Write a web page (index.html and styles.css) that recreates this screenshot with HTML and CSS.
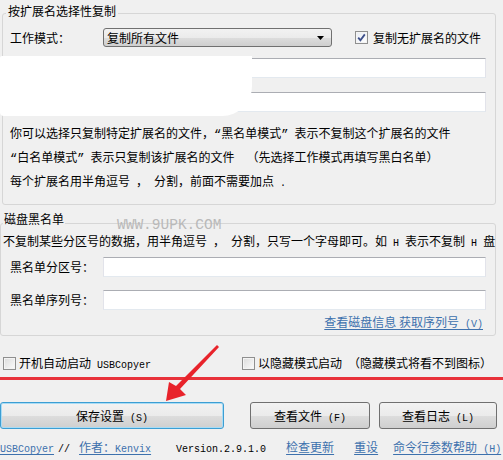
FILE: index.html
```html
<!DOCTYPE html>
<html lang="zh-CN">
<head>
<meta charset="utf-8">
<title>USBCopyer</title>
<link rel="stylesheet" href="styles.css">
</head>
<body>
<div class="page">
  <fieldset class="grp g1">
    <legend>按扩展名选择性复制</legend>
    <div class="row r1">
      <span class="lbl">工作模式：</span>
      <div class="combo">
        <span>复制所有文件</span>
        <svg class="drop" width="7" height="4" viewBox="0 0 7 4"><path d="M0 0H7L3.5 4Z" fill="#000"/></svg>
      </div>
      <span class="chk on">
        <svg width="9" height="9" viewBox="0 0 9 9"><path d="M1.2 4.6L3.4 7.2L7.8 1.4" fill="none" stroke="#3d4f8a" stroke-width="1.8"/></svg>
      </span>
      <span class="chk-text">复制无扩展名的文件</span>
    </div>
    <div class="field f1"></div>
    <div class="field f2"></div>
    <div class="desc">
      <p>你可以选择只复制特定扩展名的文件，<span class="q">“</span>黑名单模式<span class="q">”</span><span class="m"> </span>表示不复制这个扩展名的文件</p>
      <p><span class="q">“</span>白名单模式<span class="q">”</span><span class="m"> </span>表示只复制该扩展名的文件<span class="m">  </span>（先选择工作模式再填写黑白名单）</p>
      <p>每个扩展名用半角逗号<span class="m"> </span>，<span class="m"> </span>分割，前面不需要加点<span class="m"> .</span></p>
    </div>
  </fieldset>

  <fieldset class="grp g2">
    <legend>磁盘黑名单</legend>
    <p class="note">不复制某些分区号的数据，用半角逗号<span class="m"> </span>，<span class="m"> </span>分割，只写一个字母即可。如<span class="m"> H </span>表示不复制<span class="m"> H </span>盘</p>
    <div class="row r2">
      <span class="lbl">黑名单分区号：</span>
      <div class="field"></div>
    </div>
    <div class="row r3">
      <span class="lbl">黑名单序列号：</span>
      <div class="field"></div>
    </div>
    <div class="linkline"><a class="lnk">查看磁盘信息 获取序列号<span class="m"> (V)</span></a></div>
  </fieldset>

  <div class="opts">
    <span class="chk"></span>
    <span class="opt-text">开机自动启动<span class="m"> USBCopyer</span></span>
    <span class="chk c2"></span>
    <span class="opt-text">以隐藏模式启动<span class="m"> </span>（隐藏模式将看不到图标）</span>
  </div>

  <div class="redline"></div>

  <div class="btns">
    <button class="btn b1">保存设置<span class="m"> (S)</span></button>
    <button class="btn b2">查看文件<span class="m"> (F)</span></button>
    <button class="btn b3">查看日志<span class="m"> (L)</span></button>
  </div>

  <div class="footer">
    <a class="lnk f-usb"><span class="m">USBCopyer</span></a>
    <span class="f-sep"><span class="m">//</span></span>
    <a class="lnk f-auth">作者：<span class="m">Kenvix</span></a>
    <span class="f-ver"><span class="m">Version.2.9.1.0</span></span>
    <a class="lnk f-upd">检查更新</a>
    <a class="lnk f-reset">重设</a>
    <a class="lnk f-help">命令行参数帮助<span class="m"> (H)</span></a>
  </div>

  <div class="blob"></div>
  <span class="wm">WWW.9UPK.COM</span>
  <svg class="arrow" width="503" height="460" viewBox="0 0 503 460">
    <path d="M217 345 L219 347 L180 389 L186 395 L166 401 L169 382 L176 386 Z" fill="#e8232b"/>
  </svg>
</div>
</body>
</html>
```

FILE: styles.css
```css
* { box-sizing: border-box; }
html, body { margin: 0; padding: 0; }
body {
  background: #f0f0f0;
  font-family: "Noto Sans CJK SC", "Noto Sans", sans-serif;
  font-size: 12px;
  color: #000;
}
.page {
  position: relative;
  width: 503px;
  height: 460px;
  overflow: hidden;
}
p { margin: 0; }
.m {
  font-family: "Liberation Mono", "DejaVu Sans Mono", monospace;
  font-size: 10px;
  line-height: 0;
  white-space: pre;
}
.q {
  font-family: "Liberation Mono", monospace;
  font-size: 12px;
  line-height: 0;
}

.grp {
  margin: 0;
  padding: 0;
  border: 1px solid #d6d6d6;
  border-radius: 3px;
  min-width: 0;
}
.grp legend {
  font-size: 12px;
  height: 16px;
  padding: 0 2px;
}
.g1 {
  margin: 5px 0 0 2px;
  width: 494px;
}
.g1 legend {
  margin-left: 3px;
  line-height: 11px;
  padding-bottom: 5px;
}
.g2 {
  margin: 10px 0 0 0;
  width: 496px;
}
.g2 legend {
  margin-left: 2px;
  padding: 0 1px 8px 1px;
  line-height: 8px;
}

.row {
  display: flex;
  align-items: center;
}
.lbl {
  line-height: 16px;
  white-space: nowrap;
}
.r1 {
  margin-top: 7px;
  height: 19px;
  padding-left: 7px;
}
.r1 .lbl { width: 93px; }

.combo {
  width: 229px;
  height: 19px;
  border: 1px solid #707070;
  border-radius: 3px;
  background: linear-gradient(#f2f2f2 0%, #ebebeb 50%, #dddddd 51%, #cfcfcf 100%);
  display: flex;
  align-items: center;
  justify-content: space-between;
  padding: 0 7px 0 3px;
  line-height: 16px;
}
.drop { display: block; }

.chk {
  width: 13px;
  height: 13px;
  border: 1px solid #8f8f8f;
  background: linear-gradient(135deg, #dcdcdc, #fbfbfb);
  box-shadow: inset 0 0 0 1px #f4f4f4;
  display: flex;
  align-items: center;
  justify-content: center;
  flex: none;
}
.chk.on {
  background: linear-gradient(135deg, #e8ecf3, #ffffff);
}
.r1 .chk { margin-left: 23px; }
.chk-text { margin-left: 5px; line-height: 16px; }

.field {
  height: 20px;
  background: #fff;
  border: 1px solid #e2e3ea;
  border-top-color: #abadb3;
  border-bottom-color: #e3e9ef;
}
.g1 .field {
  margin-left: 100px;
  width: 383px;
}
.f1 { margin-top: 11px; }
.f2 { margin-top: 14px; }

.desc {
  margin: 9px 0 11px 0;
  padding-left: 7px;
  line-height: 24px;
  white-space: nowrap;
}

.note {
  margin-top: 0;
  padding-left: 2px;
  line-height: 20px;
  white-space: nowrap;
}
.r2, .r3 {
  height: 20px;
  padding-left: 9px;
}
.r2 { margin-top: 6px; }
.r3 { margin-top: 13px; }
.r2 .lbl, .r3 .lbl { width: 93px; }
.r2 .field, .r3 .field { width: 383px; }

.linkline {
  margin: 5px 0 6px 0;
  line-height: 14px;
  height: 14px;
  text-align: right;
  padding-right: 12px;
}
.lnk {
  color: #3d71ad;
  text-decoration: underline;
  text-underline-offset: 2px;
}

.opts {
  margin-top: 19px;
  height: 16px;
  display: flex;
  align-items: center;
  padding-left: 3px;
  white-space: nowrap;
}
.opt-text { margin-left: 3px; line-height: 16px; }
.chk.c2 { margin-left: 91px; }

.redline {
  margin-top: 6px;
  height: 3px;
  background: #e8323a;
}

.btns {
  margin-top: 22px;
  display: flex;
}
.btn {
  height: 27px;
  border: 1px solid #707070;
  border-radius: 3px;
  background: linear-gradient(#f2f2f2 0%, #ebebeb 50%, #dddddd 51%, #cfcfcf 100%);
  font-family: "Noto Sans CJK SC", sans-serif;
  font-size: 12px;
  line-height: 16px;
  color: #000;
  padding: 0;
  white-space: nowrap;
}
.b1 {
  width: 224px;
  border-color: #3c9ed3;
  box-shadow: inset 0 0 0 1px #a9dcf5;
}
.b2 { width: 120px; margin-left: 26px; }
.b3 { width: 118px; margin-left: 9px; }

.footer {
  margin-top: 11px;
  display: flex;
  align-items: center;
  height: 14px;
  line-height: 14px;
  white-space: nowrap;
}
.f-sep { margin-left: 4px; }
.f-auth { margin-left: 9px; }
.f-ver { margin-left: 25px; color: #000; }
.f-upd { margin-left: 20px; }
.f-reset { margin-left: 20px; }
.f-help { margin-left: 15px; }

.blob {
  position: absolute;
  left: 0;
  top: 56px;
  width: 252px;
  height: 60px;
  background: #fff;
  border-radius: 2px 0 30px 4px;
}
.wm {
  position: absolute;
  left: 117px;
  top: 217px;
  font-family: "Liberation Mono", monospace;
  font-size: 14.5px;
  line-height: 16px;
  color: #b9b9b9;
}
.arrow {
  position: absolute;
  left: 0;
  top: 0;
  pointer-events: none;
}
```
